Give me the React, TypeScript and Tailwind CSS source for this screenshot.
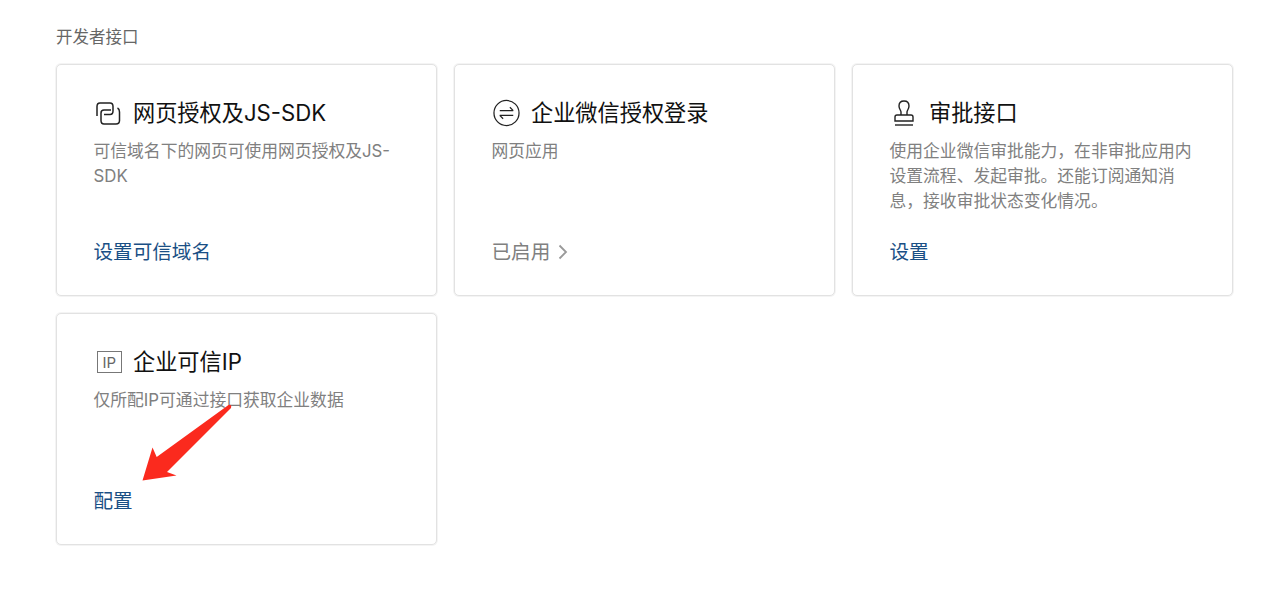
import type { ReactNode } from 'react'

interface Api {
  title: string
  desc: string
  icon: ReactNode
  link: string
  muted?: boolean
  marked?: boolean
}

const APIS: Api[] = [
  {
    title: '网页授权及JS-SDK',
    desc: '可信域名下的网页可使用网页授权及JS-SDK',
    link: '设置可信域名',
    icon: (
      <svg className="ml-[1px]" width="26" height="23" viewBox="0 0 26 23" fill="none" stroke="#222" strokeWidth="1.5">
        <path d="M2 14V4.500Q2 1 5 1H15Q18 1 18 4.500V9Q18 12.500 15 12.500H9" />
        <path d="M16 8H9Q6 8 6 11V18.500Q6 22 9 22H21Q24.500 22 24.500 18.500V10Q24.500 7 22.500 6" />
      </svg>
    ),
  },
  {
    title: '企业微信授权登录',
    desc: '网页应用',
    link: '已启用',
    muted: true,
    icon: (
      <svg className="ml-[1px]" width="28" height="28" viewBox="0 0 28 28" fill="none" stroke="#222" strokeWidth="1.3">
        <circle cx="14" cy="14" r="13" />
        <path d="M7 11.500h14M17.500 8l3.500 3.500" />
        <path d="M21 16.500H7M10.500 20L7 16.500" />
      </svg>
    ),
  },
  {
    title: '审批接口',
    desc: '使用企业微信审批能力，在非审批应用内设置流程、发起审批。还能订阅通知消息，接收审批状态变化情况。',
    link: '设置',
    icon: (
      <svg className="ml-[4px]" width="20" height="26" viewBox="0 0 20 26" fill="none" stroke="#222" strokeWidth="1.4">
        <path d="M7 15V12C7 10.500 5 9 5 6C5 3 7 1 10 1S15 3 15 6C15 9 13 10.500 13 12V15" />
        <path d="M1 21V17Q1 15 3 15H17Q19 15 19 17V21Z" />
        <path d="M1 25H19" />
      </svg>
    ),
  },
  {
    title: '企业可信IP',
    desc: '仅所配IP可通过接口获取企业数据',
    link: '配置',
    marked: true,
    icon: (
      <span className="ml-[3.500px] flex h-[22px] w-[26px] items-center justify-center border border-[#777] text-[15px] leading-none text-[#666]">
        IP
      </span>
    ),
  },
]

function ApiCard({ api }: { api: Api }) {
  return (
    <div className="relative flex h-[232px] flex-col rounded-[5px] border border-[#e2e2e2] bg-white pt-[33px] pb-[29px] pl-[36.500px] pr-[36.500px] shadow-[0_0_0_1px_#f4f4f4]">
      <div className="flex h-[30px] items-center gap-[11.500px] text-[22.200px] leading-[30px] text-[#111]">
        <span className="flex w-[28px] shrink-0 items-center justify-start">{api.icon}</span>
        <span>{api.title}</span>
      </div>
      <p className="mt-[10.500px] text-[16.800px] leading-[25px] text-[#808080]">{api.desc}</p>
      <div className="mt-auto flex items-center gap-[8px] text-[19.600px] leading-[28px]">
        <span className={api.muted ? 'text-[#808080]' : 'text-[#1a4f85]'}>{api.link}</span>
        {api.muted && (
          <svg width="10" height="16" viewBox="0 0 10 16" fill="none" stroke="#999" strokeWidth="1.800">
            <path d="M1.500 1.500L8 8l-6.500 6.500" />
          </svg>
        )}
      </div>
      {api.marked && (
        <svg className="absolute left-[80px] top-[85px]" width="100" height="90" viewBox="0 0 100 90" fill="#fb2a1e">
          <path d="M5.500 81.500L15.500 48.500L19.700 58L91.500 6Q95 5 94 9L30 73L39.500 76.500Z" />
        </svg>
      )}
    </div>
  )
}

export default function App() {
  return (
    <div className="min-h-[591px] bg-white pl-[56px] pr-[47px] pt-[26px] font-['Inter','Noto_Sans_CJK_SC',sans-serif]">
      <h2 className="mb-[16px] text-[16.500px] font-normal leading-[22px] text-[#666]">开发者接口</h2>
      <div className="grid grid-cols-3 gap-[17px]">
        {APIS.map((api) => (
          <ApiCard key={api.title} api={api} />
        ))}
      </div>
    </div>
  )
}
